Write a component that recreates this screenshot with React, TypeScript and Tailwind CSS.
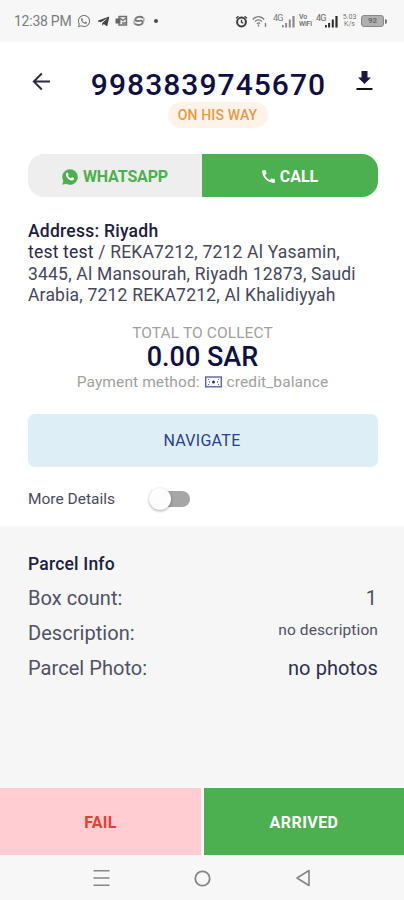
import React, { useState } from 'react';
import { FaWhatsapp, FaTelegramPlane } from 'react-icons/fa';
import { MdCall } from 'react-icons/md';

const SignalBars: React.FC<{ dim?: boolean }> = ({ dim }) => (
  <svg width="13" height="13" viewBox="0 0 13 13" fill={dim ? '#8c8c8c' : '#2b2b2b'}>
    <rect x="0" y="10" width="1.8" height="2.5" />
    <rect x="3.1" y="8" width="2" height="4.5" />
    <rect x="6.8" y="4.5" width="2" height="8" />
    <rect x="10.4" y="1" width="2.2" height="11.5" />
  </svg>
);

const StatusBar: React.FC = () => (
  <div className="h-[42px] shrink-0 bg-[#f7f7f7] flex items-center justify-between pl-[14px] pr-[17px] text-[#555]">
    <div className="flex items-center">
      <span className="text-[14px] w-[58px] tracking-[-0.25px] whitespace-nowrap text-[#7c7c7c]">12:38 PM</span>
      <FaWhatsapp className="ml-[5px] w-[14px] h-[14px] text-[#777]" />
      <FaTelegramPlane className="ml-[6px] w-[13px] h-[13px] text-[#444]" />
      <svg className="ml-[5px]" width="13" height="12" viewBox="0 0 13 12" fill="none" stroke="#707070" strokeWidth="1.4">
        <path d="M4 1.500h7.500v8.500H4z" />
        <path d="M5 3l3 2.500L11 3M7 8h4" />
        <rect x="0.5" y="3.5" width="5" height="5" fill="#666" stroke="none" />
      </svg>
      <svg className="ml-[5px]" width="12" height="12" viewBox="0 0 13 13" fill="none" stroke="#777" strokeWidth="2">
        <path d="M11 3.200C8 .8 3 2 2.500 5c-.3 1.500 2 1.800 4 1.300 2-.5 4.700-.2 4 2-.8 2.700-5.500 3.500-8.500 1.200" />
        <path d="M1.200 6v4M11.800 3v4" strokeWidth="1" />
      </svg>
      <span className="ml-[9px] w-[4px] h-[4px] rounded-full bg-[#4a4a4a]" />
    </div>
    <div className="flex items-center">
      <svg width="13" height="13" viewBox="0 0 13 13" fill="none" stroke="#3a3a3a">
        <circle cx="6.500" cy="7" r="4.400" strokeWidth="2" />
        <path d="M6.500 4.800v2.500l1.800 1M1 3.200l2.500-2M12 3.200l-2.500-2" strokeWidth="1.300" />
      </svg>
      <svg className="ml-[4px]" width="15" height="13" viewBox="0 0 15 13" fill="none" stroke="#777" strokeWidth="1.3">
        <path d="M.8 4.500C4 .6 9 .6 12.200 4.500M3 6.600c2-2.200 5-2.200 7 0M4.900 8.600c1-1 2.200-1 3.200 0" />
        <path d="M6.500 9.500v2M13.500 8v4" />
      </svg>
      <span className="ml-[6px] mb-[6px] text-[9px] leading-none w-[9px] tracking-[-0.8px] text-[#777]">4G</span>
      <SignalBars dim />
      <span className="ml-[4px] w-[14px] text-[7px] leading-[7px] font-medium tracking-[-0.2px] text-[#6a6a6a]">Vo<br />WiFi</span>
      <span className="ml-[3px] mb-[6px] text-[9px] leading-none w-[9px] tracking-[-0.8px] text-[#666]">4G</span>
      <SignalBars />
      <span className="ml-[4px] w-[15px] text-center text-[7px] leading-[7px] text-[#777]">5.03<br />K/s</span>
      <div className="ml-[4px] w-[23px] h-[12px] rounded-[3px] border border-[#888] bg-[#b0b0b0] text-[8px] leading-[10px] font-bold text-center text-[#6a6a6a]">92</div>
      <div className="ml-px w-[2px] h-[5px] rounded-r-sm bg-[#777]" />
    </div>
  </div>
);

const Header: React.FC = () => (
  <div className="relative pt-[26px] flex flex-col items-center">
    <h1 className="ml-[13px] text-[30px] leading-[34px] font-medium tracking-[1.05px] text-[#0f0f42]">9983839745670</h1>
    <span className="ml-[31px] w-[100px] h-[26px] rounded-[13px] bg-[#fef3e8] flex items-center justify-center text-[14px] font-medium tracking-[0.15px] text-[#e49a45] whitespace-nowrap">
      ON HIS WAY
    </span>
    <button aria-label="Back" className="absolute left-[32px] top-[30px]">
      <svg width="19" height="20" viewBox="0 0 19 20" fill="none" stroke="#2b2b3b" strokeWidth="1.900">
        <path d="M18 9.500H2M9.800 1.500l-8 8 8 8" />
      </svg>
    </button>
    <button aria-label="Download" className="absolute right-[31px] top-[28px]">
      <svg width="17" height="21" viewBox="0 0 17 21" fill="#17173f">
        <path d="M5.500 1h6v6.500H15L8.500 14 2 7.500h3.500z" />
        <path d="M.5 18h16v2H.5z" fill="#111" />
      </svg>
    </button>
  </div>
);

const BanknoteIcon: React.FC = () => (
  <svg className="mx-[5px]" width="17" height="12" viewBox="0 0 17 12" fill="none" stroke="#5a649b" strokeWidth="1.4">
    <rect x="0.700" y="1" width="15.600" height="9.800" />
    <circle cx="8.500" cy="5.900" r="1.500" fill="#26337a" stroke="none" />
    <path d="M3.500 3v1M3.500 8v1M13.500 3v1M13.500 8v1M4.500 5.200v1.500M12.500 5.200v1.500" strokeWidth="1" />
  </svg>
);

const parcelInfo = [
  { label: 'Box count:', value: '1', valueClass: 'text-[20px] pr-[1px]' },
  { label: 'Description:', value: 'no description', valueClass: 'text-[15.5px] tracking-[0.1px] pb-[4px]' },
  { label: 'Parcel Photo:', value: 'no photos', valueClass: 'text-[20px] tracking-[0.1px] text-[#2f2f4c]' },
];

const App: React.FC = () => {
  const [showDetails, setShowDetails] = useState(false);

  return (
    <div className="w-full h-[900px] flex flex-col bg-[#f6f6f6] overflow-hidden font-[Roboto,sans-serif]">
      <StatusBar />

      <div className="h-[484px] shrink-0 bg-white">
        <Header />

        <div className="ml-[28px] mr-[26px] mt-[26px] h-[43px] flex rounded-[16px] overflow-hidden text-[16px] font-bold">
          <button className="w-[174px] bg-[#eeeeee] text-[#4caf50] flex items-center justify-center pt-[2px] tracking-[-0.15px]">
            <svg className="mr-[5px]" width="16" height="16" viewBox="0 0 16 16">
              <path d="M8 .2a7.800 7.800 0 0 0-6.700 11.700L.2 15.800l4-1A7.800 7.800 0 1 0 8 .2z" fill="#4caf50" />
              <path d="M5.300 3.600c.4 0 .6.100.8.600l.5 1.200c.1.300 0 .5-.6 1.200.7 1.400 1.600 2.200 3 2.800l.8-1c.2-.2.4-.2.6-.1l1.400.7c.3.200.3.300.2.8-.2 1-1.200 1.700-2.300 1.600C7 11 4.200 8.300 3.900 5.900c-.1-1.100.6-2.300 1.400-2.300z" fill="#fff" />
            </svg>
            WHATSAPP
          </button>
          <button className="grow bg-[#4caf50] text-white flex items-center justify-center pt-[2px] pr-[2px]">
            <MdCall className="mr-[3px] w-[17px] h-[17px]" />
            CALL
          </button>
        </div>

        <div className="mt-[23.500px] mx-[28px] text-[17.500px] leading-[21.500px] text-[#46465a]">
          <p className="font-medium text-[#20203d] tracking-[0.25px]">Address: Riyadh</p>
          <p className="whitespace-nowrap tracking-[0.2px]">
            <span className="text-[#2a2a45]">test test</span> / REKA7212, 7212 Al Yasamin,<br />
            3445, Al Mansourah, Riyadh 12873, Saudi<br />
            Arabia, 7212 REKA7212, Al Khalidiyyah
          </p>
        </div>

        <div className="mt-[16.500px] pl-px flex flex-col items-center text-[#a0a0a0]">
          <p className="text-[15.500px] leading-[20px] tracking-[0.1px]">TOTAL TO COLLECT</p>
          <p className="text-[27px] leading-[29px] font-medium text-[#0f0f42]">0.00 SAR</p>
          <p className="text-[15.500px] leading-[20px] flex items-center tracking-[0.1px]">
            Payment method:
            <BanknoteIcon />
            credit_balance
          </p>
        </div>

        <div className="mt-[22px] ml-[28px] mr-[26px]">
          <button className="w-full h-[53px] rounded-[7px] bg-[#deeef6] text-[#2b4189] text-[16px] tracking-[0.3px] pt-[1px] pr-[2px]">NAVIGATE</button>
        </div>

        <div className="mt-[20px] ml-[28px] h-[24px] flex items-center text-[#4a4a5c] text-[15.500px]">
          <span className="w-[121px] pt-[2px]">More Details</span>
          <button
            role="switch"
            aria-checked={showDetails}
            aria-label="More Details"
            onClick={() => setShowDetails(!showDetails)}
            className="w-[42px] h-[24px] flex items-center"
          >
            <span className={`w-[22px] h-[22px] shrink-0 rounded-full bg-[#fdfdfd] shadow-[0_1px_3px_rgba(0,0,0,0.35)] z-10 ${showDetails ? 'order-2' : ''}`} />
            <span className="w-[30px] -ml-[11px] h-[16px] rounded-full bg-[#a6a6a6]" />
          </button>
        </div>
      </div>

      <div className="grow pl-[28px] pr-[26px] pt-[27px] text-[#505066]">
        <h2 className="text-[17.500px] leading-[22px] font-medium tracking-[0.2px] text-[#20203d]">Parcel Info</h2>
        <div className="mt-[5px]">
          {parcelInfo.map((row) => (
            <div key={row.label} className="h-[35px] flex items-center justify-between">
              <span className="text-[20px] tracking-[0.05px]">{row.label}</span>
              <span className={row.valueClass}>{row.value}</span>
            </div>
          ))}
        </div>
      </div>

      <div className="h-[67px] shrink-0 flex gap-[3px] text-[16px] font-bold">
        <button className="w-[201px] bg-[#ffcdd2] text-[#e04038] tracking-[0.3px] pt-[2px]">FAIL</button>
        <button className="grow bg-[#4caf50] text-white tracking-[0.45px] pt-[2px]">ARRIVED</button>
      </div>

      <div className="h-[45px] shrink-0 bg-[#f7f7f7] flex items-center justify-center gap-[84px] pt-[1px]">
        <svg width="17" height="18" viewBox="0 0 17 18" stroke="#858585" strokeWidth="1.600">
          <path d="M.5 1.800h16M.5 9h16M.5 16.200h16" />
        </svg>
        <svg width="17" height="17" viewBox="0 0 17 17" fill="none" stroke="#858585" strokeWidth="1.800">
          <circle cx="8.500" cy="8.500" r="7.200" />
        </svg>
        <svg width="17" height="18" viewBox="0 0 17 18" fill="none" stroke="#858585" strokeWidth="1.600" strokeLinejoin="round">
          <path d="M14 1.500v15L2 9z" />
        </svg>
      </div>
    </div>
  );
};

export default App;
